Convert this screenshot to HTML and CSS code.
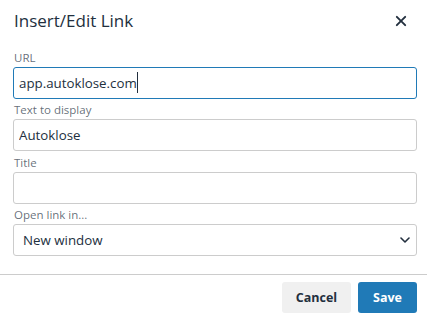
FILE: index.html
```html
<!DOCTYPE html>
<html>

<head>
    <title>Insert/Edit Link</title>
    <link rel="stylesheet" href="styles.css">
</head>

<body>
    <div class="dialog">
        <div class="dialog-header">
            <div class="dialog-title">Insert/Edit Link</div>
            <button class="close-btn" title="Close">
                <svg width="22" height="22" viewBox="0 0 24 24">
                    <path d="M17.3 8.2L13.4 12l3.9 3.8a1 1 0 0 1-1.5 1.5L12 13.4l-3.8 3.9a1 1 0 0 1-1.5-1.5l3.9-3.8-3.9-3.8a1 1 0 0 1 1.5-1.5l3.8 3.9 3.8-3.9a1 1 0 0 1 1.5 1.5z" fill="#222f3e"/>
                </svg>
            </button>
        </div>
        <div class="dialog-body">
            <div class="field">
                <label class="label" for="urlInput">URL</label>
                <div class="input-wrap">
                    <input type="text" id="urlInput" class="text-input focused" value="app.autoklose.com">
                    <span class="caret"></span>
                </div>
            </div>
            <div class="field">
                <label class="label" for="textInput">Text to display</label>
                <input type="text" id="textInput" class="text-input" value="Autoklose">
            </div>
            <div class="field">
                <label class="label" for="titleInput">Title</label>
                <input type="text" id="titleInput" class="text-input" value="">
            </div>
            <div class="field">
                <label class="label" for="targetSelect">Open link in...</label>
                <div class="select-wrap">
                    <select id="targetSelect" class="select-input">
                        <option>Current window</option>
                        <option selected>New window</option>
                    </select>
                    <svg class="chevron" width="10" height="6" viewBox="0 0 10 6">
                        <polyline points="1,1 5,5 9,1" fill="none" stroke="#222f3e" stroke-width="1.6" stroke-linecap="round" stroke-linejoin="round"/>
                    </svg>
                </div>
            </div>
        </div>
        <div class="dialog-footer">
            <button class="btn btn-secondary">Cancel</button>
            <button class="btn btn-primary">Save</button>
        </div>
    </div>
</body>

</html>
```

FILE: styles.css
```css
body {
    font-family: 'Open Sans', 'Noto Sans', sans-serif;
    color: #222f3e;
    background-color: #fff;
    margin: 0;
}

.dialog {
    width: 427px;
}

.dialog-header {
    display: flex;
    align-items: center;
    justify-content: space-between;
    height: 41px;
    padding: 0 15px 0 14px;
}

.dialog-title {
    font-size: 17px;
    color: #222f3e;
}

.close-btn {
    background: none;
    border: none;
    padding: 0;
    width: 22px;
    height: 22px;
    cursor: pointer;
}

.close-btn svg {
    display: block;
}

.dialog-body {
    padding: 6px 10px 18px 13px;
}

.field {
    display: flex;
    flex-direction: column;
    height: 52px;
}

.field:nth-child(3) {
    margin-top: 1px;
}

.label {
    margin-top: 2px;
    padding-left: 1px;
    font-size: 11.5px;
    line-height: 18px;
    color: rgba(34, 47, 62, 0.7); /* 흐린 라벨 색 */
}

.text-input,
.select-input {
    box-sizing: border-box;
    width: 100%;
    height: 32px;
    margin: 0;
    border: 1px solid #ccc;
    border-radius: 3px;
    background-color: #fff;
    font-family: inherit;
    font-size: 13.3px;
    color: #222f3e;
    outline: none;
}

.text-input {
    padding: 0 5px;
}

.text-input.focused,
.text-input:focus {
    border-color: #207ab7; /* 포커스 파란색 */
}

.input-wrap {
    position: relative;
}

/* 깜빡이는 커서 자리 */
.caret {
    position: absolute;
    left: 124px;
    top: 5px;
    width: 1px;
    height: 21px;
    background-color: #222f3e;
}

.select-wrap {
    position: relative;
}

.select-input {
    appearance: none;
    -webkit-appearance: none;
    padding: 0 9px;
}

.chevron {
    position: absolute;
    right: 7px;
    top: 13px;
    pointer-events: none;
}

.dialog-footer {
    display: flex;
    justify-content: flex-end;
    gap: 7px;
    border-top: 1px solid #ccc;
    padding: 7px 10px 5px;
}

.btn {
    height: 31px;
    border: none;
    border-radius: 3px;
    font-family: inherit;
    font-size: 12.5px;
    font-weight: bold;
    cursor: pointer;
}

.btn-secondary {
    width: 69px;
    background-color: #f0f0f0;
    color: #222f3e;
}

.btn-primary {
    width: 59px;
    background-color: #207ab7;
    color: #fff;
}
```
